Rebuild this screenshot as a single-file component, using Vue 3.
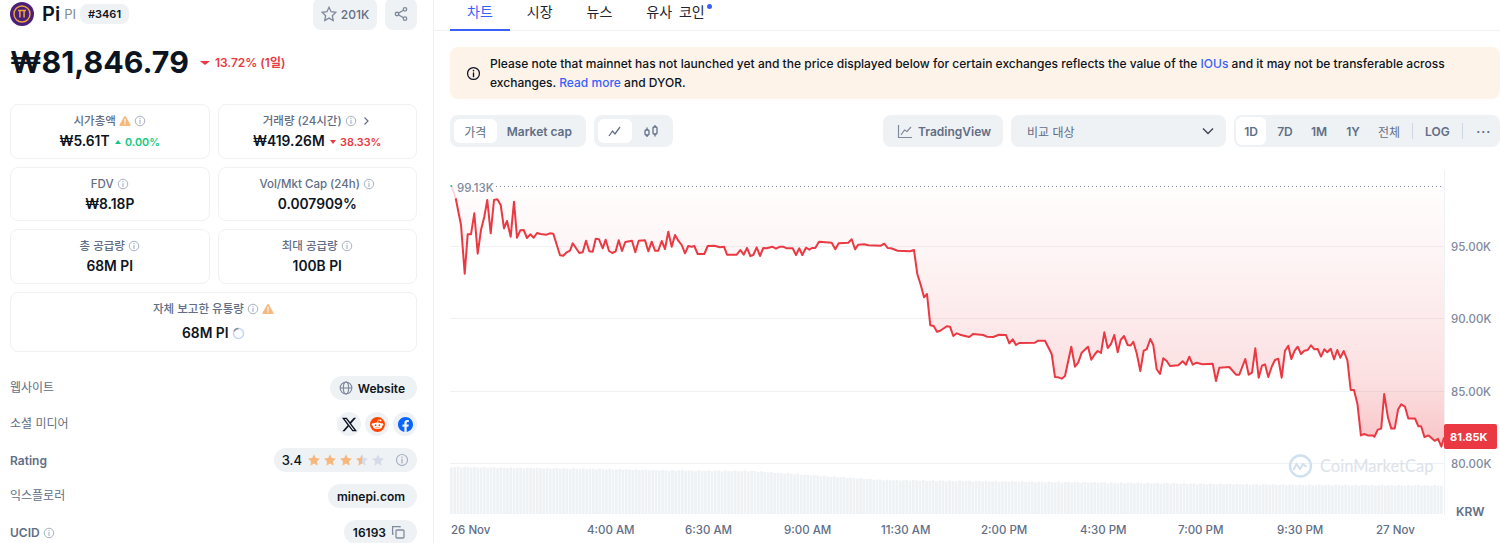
<template>
  <div class="page">
    <svg class="defs" width="0" height="0">
      <symbol id="i-info" viewBox="0 0 24 24">
        <circle cx="12" cy="12" r="9.5" fill="none" stroke="currentColor" stroke-width="2" />
        <path d="M12 11v6" stroke="currentColor" stroke-width="2.2" stroke-linecap="round" />
        <circle cx="12" cy="7.4" r="1.3" fill="currentColor" />
      </symbol>
      <symbol id="i-warn" viewBox="0 0 24 24">
        <path d="M10.3 3.2a2 2 0 0 1 3.4 0l9 15.8a2 2 0 0 1-1.7 3H3a2 2 0 0 1-1.7-3z" fill="#f6b87e" />
        <path d="M12 8.5v6" stroke="#fff" stroke-width="2.4" stroke-linecap="round" />
        <circle cx="12" cy="18" r="1.4" fill="#fff" />
      </symbol>
      <symbol id="i-star" viewBox="0 0 24 24">
        <path d="M12 2l3.1 6.6 7.1.9-5.2 5 1.3 7.2L12 18.2l-6.3 3.5L7 14.5l-5.2-5 7.1-.9z" />
      </symbol>
    </svg>

    <!-- левая колонка -->
    <aside class="side">
      <div class="head">
        <svg class="logo" viewBox="0 0 24 24">
          <circle cx="12" cy="12" r="12" fill="#4a1f7a" />
          <circle cx="12" cy="12" r="8" fill="none" stroke="#eea63a" stroke-width="1.4" />
          <path d="M8 8.6h8M9.9 8.6v7M14.1 8.6v7" fill="none" stroke="#eea63a" stroke-width="1.5" />
        </svg>
        <span class="name">Pi</span>
        <span class="sym">PI</span>
        <span class="rank">#3461</span>
        <button class="btn star">
          <svg viewBox="0 0 24 24" class="ic16"><use href="#i-star" fill="none" stroke="#808a9d" stroke-width="2" /></svg>
          201K
        </button>
        <button class="btn share">
          <svg viewBox="0 0 24 24" class="ic16" fill="none" stroke="#808a9d" stroke-width="2">
            <circle cx="18" cy="5" r="2.6" /><circle cx="6" cy="12" r="2.6" /><circle cx="18" cy="19" r="2.6" />
            <path d="M8.3 10.7l7.4-4.4M8.3 13.3l7.4 4.4" />
          </svg>
        </button>
      </div>

      <div class="price-row">
        <span class="price">₩81,846.79</span>
        <span class="down big"><i class="tri-down"></i>13.72% (1일)</span>
      </div>

      <div class="cards">
        <div class="card">
          <div class="label">시가총액 <svg class="ic12"><use href="#i-warn" /></svg> <svg class="ic12 inf"><use href="#i-info" /></svg></div>
          <div class="value">₩5.61T <span class="up"><i class="tri-up"></i>0.00%</span></div>
        </div>
        <div class="card">
          <div class="label">거래량 (24시간) <svg class="ic12 inf"><use href="#i-info" /></svg>
            <svg class="ic12 chev" viewBox="0 0 12 12" fill="none" stroke="#616e85" stroke-width="1.2"><path d="M4.5 2.5L8 6l-3.5 3.5" /></svg>
          </div>
          <div class="value">₩419.26M <span class="down"><i class="tri-down"></i>38.33%</span></div>
        </div>
        <div class="card" v-for="c in simpleCards" :key="c.label">
          <div class="label">{{ c.label }} <svg class="ic12 inf"><use href="#i-info" /></svg></div>
          <div class="value">{{ c.value }}</div>
        </div>
        <div class="card wide">
          <div class="label">자체 보고한 유통량 <svg class="ic12 inf"><use href="#i-info" /></svg> <svg class="ic12"><use href="#i-warn" /></svg></div>
          <div class="value">68M PI
            <svg class="spin" viewBox="0 0 14 14" fill="none" stroke-width="1.6">
              <circle cx="7" cy="7" r="5.4" stroke="#c6d4fb" />
              <path d="M2.2 4.6A5.4 5.4 0 0 1 7 1.6" stroke="#8a9099" />
            </svg>
          </div>
        </div>
      </div>

      <div class="rows">
        <div class="row">
          <span class="rlabel up2">웹사이트</span>
          <span class="pill">
            <svg viewBox="0 0 24 24" class="ic14" fill="none" stroke="#808a9d" stroke-width="2">
              <circle cx="12" cy="12" r="10" /><ellipse cx="12" cy="12" rx="4.5" ry="10" /><path d="M2 12h20" />
            </svg>
            Website
          </span>
        </div>
        <div class="row">
          <span class="rlabel up2">소셜 미디어</span>
          <span class="socials">
            <span class="round">
              <svg viewBox="0 0 24 24" class="ic14"><path fill="#0d1421" d="M18.901 1.153h3.68l-8.04 9.19L24 22.846h-7.406l-5.8-7.584-6.638 7.584H.474l8.6-9.83L0 1.154h7.594l5.243 6.932ZM17.61 20.644h2.039L6.486 3.24H4.298Z" /></svg>
            </span>
            <span class="round">
              <svg viewBox="0 0 24 24" class="ic14">
                <circle cx="12" cy="12" r="12" fill="#ff4500" />
                <ellipse cx="12" cy="14" rx="7.6" ry="5.2" fill="#fff" />
                <circle cx="4.6" cy="11.8" r="1.9" fill="#fff" /><circle cx="19.4" cy="11.8" r="1.9" fill="#fff" />
                <circle cx="9" cy="13" r="1.4" fill="#ff4500" /><circle cx="15" cy="13" r="1.4" fill="#ff4500" />
                <path d="M8.8 16.2c2 1.4 4.4 1.4 6.4 0" stroke="#ff4500" stroke-width="1" fill="none" />
                <path d="M12 9l1-4.4 3.4.8" stroke="#fff" stroke-width="1" fill="none" />
                <circle cx="17" cy="5.4" r="1.4" fill="#fff" />
              </svg>
            </span>
            <span class="round">
              <svg viewBox="0 0 24 24" class="ic14"><path fill="#0866ff" d="M24 12.073c0-6.627-5.373-12-12-12s-12 5.373-12 12c0 5.99 4.388 10.954 10.125 11.854v-8.385H7.078v-3.47h3.047V9.43c0-3.007 1.792-4.669 4.533-4.669 1.312 0 2.686.235 2.686.235v2.953H15.83c-1.491 0-1.956.925-1.956 1.874v2.25h3.328l-.532 3.47h-2.796v8.385C19.612 23.027 24 18.062 24 12.073z" /></svg>
            </span>
          </span>
        </div>
        <div class="row">
          <span class="rlabel strong">Rating</span>
          <span class="pill rating">
            3.4
            <span class="stars">
              <svg v-for="n in 5" :key="n" viewBox="0 0 24 24" class="ic14 rstar">
                <defs>
                  <linearGradient id="half"><stop offset="50%" stop-color="#f6b87e" /><stop offset="50%" stop-color="#d5dbe8" /></linearGradient>
                </defs>
                <use href="#i-star" :fill="n < 4 ? '#f6b87e' : n === 4 ? 'url(#half)' : '#d5dbe8'" />
              </svg>
            </span>
            <svg class="ic14 inf"><use href="#i-info" /></svg>
          </span>
        </div>
        <div class="row">
          <span class="rlabel up2">익스플로러</span>
          <span class="pill">minepi.com</span>
        </div>
        <div class="row">
          <span class="rlabel strong">UCID <svg class="ic12 inf"><use href="#i-info" /></svg></span>
          <span class="pill">
            16193
            <svg viewBox="0 0 14 14" class="ic14" fill="none" stroke="#808a9d" stroke-width="1.3">
              <rect x="5" y="5" width="8" height="8" rx="1" /><path d="M9 2.6V1.6H1.6V9h1" />
            </svg>
          </span>
        </div>
      </div>
    </aside>

    <!-- правая часть -->
    <main class="main">
      <nav class="tabs">
        <a class="tab active">차트</a>
        <a class="tab">시장</a>
        <a class="tab">뉴스</a>
        <a class="tab dotted">유사 코인</a>
      </nav>

      <div class="content">
        <div class="notice">
          <svg class="notice-ic"><use href="#i-info" /></svg>
          <p>Please note that mainnet has not launched yet and the price displayed below for certain exchanges reflects the value of the <a>IOUs</a> and it may not be transferable across exchanges. <a>Read more</a> and DYOR.</p>
        </div>

        <div class="toolbar">
          <div class="group g-kind">
            <span class="seg on cjk">가격</span>
            <span class="seg">Market cap</span>
          </div>
          <div class="group g-type">
            <span class="seg ico on">
              <svg viewBox="0 0 16 16" class="ic16" fill="none" stroke="#616e85" stroke-width="1.3"><path d="M2 13l3.5-5 2.5 3 5-7" /></svg>
            </span>
            <span class="seg ico">
              <svg viewBox="0 0 16 16" class="ic16" fill="none" stroke="#616e85" stroke-width="1.3">
                <rect x="2" y="7" width="4" height="5" rx="1" /><path d="M4 4.5V7M4 12v2" />
                <rect x="10" y="4" width="4" height="7" rx="1" /><path d="M12 2v2M12 11v2.5" />
              </svg>
            </span>
          </div>
          <div class="group plain tv">
            <svg viewBox="0 0 16 16" class="ic16" fill="none" stroke="#808a9d" stroke-width="1.2"><path d="M1.5 2v12.5H15M4 12l3.5-5 2.5 1.500L14 4" /></svg>
            TradingView
          </div>
          <div class="group plain select">
            <span class="cjk">비교 대상</span>
            <svg viewBox="0 0 12 12" class="ic12" fill="none" stroke="#3d4656" stroke-width="1.4"><path d="M1 3.5l5 5 5-5" /></svg>
          </div>
          <div class="group range">
            <span class="rng on">1D</span>
            <span class="rng">7D</span>
            <span class="rng">1M</span>
            <span class="rng">1Y</span>
            <span class="rng cjk">전체</span>
            <i class="sep"></i>
            <span class="rng">LOG</span>
            <i class="sep"></i>
            <span class="rng more">···</span>
          </div>
        </div>

        <!-- график: координаты в viewBox совпадают с координатами страницы -->
        <svg class="chart" viewBox="450 165 1050 378" width="1050" height="378">
          <defs>
            <linearGradient id="area" gradientUnits="userSpaceOnUse" x1="0" y1="187" x2="0" y2="447">
              <stop offset="0" stop-color="#ea3943" stop-opacity="0.01" />
              <stop offset="0.25" stop-color="#ea3943" stop-opacity="0.05" />
              <stop offset="0.75" stop-color="#ea3943" stop-opacity="0.16" />
              <stop offset="1" stop-color="#ea3943" stop-opacity="0.3" />
            </linearGradient>
          </defs>

          <path v-for="y in gridY" :key="y" :d="`M450 ${y}H1444`" stroke="#eff2f5" />
          <path :d="areaPath" fill="url(#area)" />
          <path d="M449.500 170V515M1444.500 170V515" stroke="#eff2f5" />
          <path d="M496 186.500H1444" stroke="#808a9d" stroke-dasharray="1 3" />

          <rect v-for="b in bars" :key="b.x" :x="b.x" :y="b.y" width="2.7" :height="514 - b.y" fill="#eff2f5" />

          <path d="M451.500 186L455.500 198" stroke="#fbd9db" stroke-width="2" fill="none" />
          <circle cx="451.300" cy="186" r="1" fill="#16c784" />
          <polyline :points="linePoints" fill="none" stroke="#ea3943" stroke-width="2" stroke-linejoin="round" />

          <text class="axis" x="457" y="191.500">99.13K</text>
          <text v-for="(t, i) in yLabels" :key="t" class="axis" x="1451" :y="gridY[i] + 4">{{ t }}</text>
          <text v-for="t in xLabels" :key="t.text" class="xl" :x="t.x" y="533.500">{{ t.text }}</text>
          <text class="krw" x="1456" y="515.500">KRW</text>

          <circle cx="1300.500" cy="466" r="10.500" fill="none" stroke="#cfe0ee" stroke-width="2.4" />
          <path d="M1293.500 470l3-6 3.500 5 3-5 3.500 3" fill="none" stroke="#cfe0ee" stroke-width="2" />
          <text class="mark" x="1320" y="472">CoinMarketCap</text>

          <rect x="1444" y="424" width="53" height="25" rx="2" fill="#ea3943" />
          <text class="tag" x="1450" y="440.500">81.85K</text>
        </svg>
      </div>
    </main>
  </div>
</template>

<script setup>
const simpleCards = [
  { label: "FDV", value: "₩8.18P" },
  { label: "Vol/Mkt Cap (24h)", value: "0.007909%" },
  { label: "총 공급량", value: "68M PI" },
  { label: "최대 공급량", value: "100B PI" },
];

const gridY = [246.5, 318.5, 391.5, 463.5];
const yLabels = ["95.00K", "90.00K", "85.00K", "80.00K"];
const xLabels = [
  { text: "26 Nov", x: 451 },
  { text: "4:00 AM", x: 587 },
  { text: "6:30 AM", x: 685 },
  { text: "9:00 AM", x: 784 },
  { text: "11:30 AM", x: 881 },
  { text: "2:00 PM", x: 981 },
  { text: "4:30 PM", x: 1080 },
  { text: "7:00 PM", x: 1178 },
  { text: "9:30 PM", x: 1277 },
  { text: "27 Nov", x: 1376 },
];

// снято с графика вручную
const line = [
  [455.7,198.3],[461,225],[464.7,273.7],[467.7,234.3],[471,234.3],[474.3,213.3],[477.7,253.7],[481,230],[484.3,216.7],[487.3,200],
  [490.7,233.3],[494,200],[497.3,199.3],[500.7,205],[504,228.3],[507,221],[510.7,236.7],[514,201.7],[517,237.7],[520.3,230.3],
  [523.7,230],[527,238],[530.3,234.3],[533.7,237.7],[537,233],[540.3,234],[546.7,234.7],[550,233.3],[553.3,233.7],[560,255.3],
  [563.3,255.7],[566.7,252.3],[570,250.7],[572.7,243.3],[579.3,253],[582.7,252.3],[586,240.7],[589.3,251.3],[592.7,251.7],[595.7,238.7],
  [599,239.3],[602.7,248.3],[605.7,239.7],[609,251],[612.3,253],[615.7,251.3],[618.7,240.3],[622,251],[625.3,242],[632,240.7],
  [635.3,252.3],[638.7,240.7],[645,240.3],[648.3,251.3],[651.7,241.7],[655,250.7],[658.3,250.7],[661.7,241],[665,249],[668.3,231.7],
  [671.7,246.7],[675,235],[678.3,240.7],[681.7,245],[685,253.3],[688.3,246],[691.7,246.7],[694.3,246],[697.7,254],[704.3,254],
  [707.7,246],[714.3,245.7],[720,247.3],[724,246.7],[727,254.7],[736.7,254.7],[740.3,250],[743.7,254.7],[747,248],[750.3,256],
  [753.3,255],[756.7,247.3],[760,256],[763.3,248],[766.7,248.3],[772.3,246.7],[776,248.7],[780,246.7],[783.3,246.7],[786.7,248.3],
  [792.7,248.3],[796,255],[799.3,248.3],[802.3,255],[806,247.7],[809.3,249.7],[812,248],[815.3,248],[819,241.7],[831.7,242.7],
  [835.3,249.3],[838.7,243.3],[848.3,242.7],[851.7,239.3],[855,249.3],[858.3,244.7],[864.3,244.3],[868.3,245.3],[881,245.7],[884.3,243.7],
  [887.7,248],[891,248.3],[897.7,250.7],[910,251.3],[914,250],[917.3,274],[920.7,284.7],[924,297.3],[927,294],[930.3,325.3],
  [933.7,326],[937,331.7],[940.3,330.7],[946.7,326.3],[950,326.7],[953.3,336],[956.7,333.3],[960,334.7],[969.3,337],[973,334],
  [983.3,335],[986.7,336.7],[993.3,337],[999,334.7],[1006,335],[1009.3,343.3],[1012.7,339.3],[1016,345],[1019.3,343],[1035,342.7],
  [1038.3,340.7],[1045,340.7],[1051.7,354],[1055,377],[1058.3,377.3],[1061.7,378.7],[1065,376],[1071.3,346.7],[1075,366.7],[1078.3,362.3],
  [1081.7,352.7],[1088,346.7],[1091.3,359.7],[1095,354],[1097.7,351],[1101,353],[1104.3,332.3],[1107.7,348],[1111,344],[1114.3,335],
  [1117.7,352.3],[1120.7,340],[1124,336],[1127.7,345],[1130.7,345.5],[1133.3,341.7],[1136.7,353.3],[1140.3,371],[1143.7,350.7],[1146.7,349.3],
  [1150.3,339],[1153.3,345],[1156.7,369.3],[1160,374],[1163.3,358.3],[1166.7,361],[1170,366],[1178.3,365.3],[1182.7,361.3],[1186,364.7],
  [1189.3,356.7],[1192.7,364.7],[1196.7,362.7],[1202.7,364.3],[1212.7,363.7],[1216,381],[1219.3,367.7],[1229.3,367],[1236,374.7],[1239.3,374.7],
  [1245.3,359],[1248.7,374.7],[1252,372.7],[1255.3,348.3],[1258.7,377.7],[1262,365.7],[1265,364.3],[1268.3,377],[1271.7,366.7],[1275,360],
  [1278.3,358.7],[1281.7,377.7],[1285,350.7],[1288.3,345.7],[1291.3,359],[1294.7,350.7],[1297.7,346.7],[1301,354],[1304.3,350.7],[1307.7,350],
  [1311,345.3],[1314.3,349.3],[1317.7,349],[1321,356.7],[1324.3,349.3],[1327.3,352.3],[1330.7,348.7],[1334,359.3],[1337.3,350],[1340.3,357.7],
  [1343.7,351],[1347.4,360.3],[1350.7,390],[1354,390],[1357.5,404.3],[1360.9,435.4],[1364.3,434],[1367.7,435.4],[1372.7,435.4],[1374.4,436.8],
  [1377.8,429.6],[1381.2,428.6],[1384.2,394.1],[1388,417.8],[1391.3,428.6],[1394.7,428.6],[1398.1,409.4],[1401.2,404.3],[1404.9,406.6],[1408.3,418.5],
  [1415,418.5],[1418.4,426.3],[1421.1,426.3],[1424.5,437.1],[1428.6,435.4],[1434.6,440.8],[1438,438.8],[1441.4,446.6],[1444,437.4],
];
const linePoints = line.map((p) => p.join(",")).join(" ");
const areaPath = "M451 187L455.7 198.3L" + line.map((p) => p.join(" ")).join("L") + "L1444 187Z";

// объёмы: верх столбиков по опорным точкам
const volStops = [[450,467],[600,469],[670,470.5],[750,471],[880,480],[1050,482],[1300,485],[1444,485.500]];
function volTop(x) {
  for (let i = 1; i < volStops.length; i++) {
    const [x0, y0] = volStops[i - 1];
    const [x1, y1] = volStops[i];
    if (x <= x1) return y0 + ((y1 - y0) * (x - x0)) / (x1 - x0);
  }
  return 485;
}
const bars = [];
for (let x = 450; x < 1443; x += 3.3) {
  bars.push({ x: +x.toFixed(1), y: +(volTop(x) + Math.sin(x * 0.7) * 0.5).toFixed(1) });
}
</script>

<style>
html, body { margin: 0; overflow: hidden; background: #fff; }
</style>

<style scoped>
.page {
  display: flex;
  width: 1500px;
  height: 543px;
  overflow: hidden;
  font-family: Inter, "Noto Sans CJK KR", sans-serif;
  color: #0d1421;
  -webkit-font-smoothing: antialiased;
}
.defs { position: absolute; }
.ic12 { width: 12px; height: 12px; vertical-align: -2px; }
.ic14 { width: 14px; height: 14px; flex: none; }
.ic16 { width: 16px; height: 16px; flex: none; }
.inf { color: #a6b0c3; }
.chev { margin-left: 3px; }

.side {
  width: 434px;
  box-sizing: border-box;
  flex: none;
  padding: 0 16px 0 10px;
  border-right: 1px solid #eff2f5;
}
.head {
  display: flex;
  align-items: center;
  height: 32px;
  margin-top: -2px;
}
.logo { width: 24px; height: 24px; margin-right: 8px; }
.name { font-size: 20px; font-weight: 600; margin-right: 4px; }
.sym { font-size: 13px; color: #808a9d; margin-right: 4px; }
.rank {
  background: #eff2f5;
  border-radius: 8px;
  font-size: 11px;
  font-weight: 600;
  line-height: 20px;
  padding: 0 8px;
}
.btn {
  display: flex;
  align-items: center;
  justify-content: center;
  height: 32px;
  border: 0;
  border-radius: 8px;
  background: #eff2f5;
  font: 500 12px Inter, sans-serif;
  color: #616e85;
}
.star { width: 64px; gap: 4px; margin-left: auto; }
.share { width: 32px; margin-left: 8px; }

.price-row {
  display: flex;
  align-items: center;
  gap: 9px;
  height: 36px;
  margin-top: 14px;
}
.price { font-size: 30.3px; font-weight: 700; line-height: 36px; }
.down { color: #ea3943; font-size: 10.8px; font-weight: 600; }
.down.big { font-size: 12px; margin-top: -2px; }
.big .tri-down { border-left-width: 5px; border-right-width: 5px; margin-right: 5px; }
.up { color: #16c784; font-size: 10.8px; font-weight: 600; }
.tri-down, .tri-up {
  display: inline-block;
  width: 0;
  height: 0;
  border-left: 3.5px solid transparent;
  border-right: 3.5px solid transparent;
  vertical-align: 2px;
  margin: 0 4px 0 2px;
}
.tri-down { border-top: 4px solid #ea3943; }
.tri-up { border-bottom: 4px solid #16c784; }

.cards {
  display: grid;
  grid-template-columns: 1fr 1fr;
  gap: 8px;
  margin-top: 24px;
}
.card {
  box-sizing: border-box;
  height: 54.5px;
  padding: 7px 4px 0;
  border: 1px solid #eff2f5;
  border-radius: 8px;
  text-align: center;
}
.card.wide {
  grid-column: 1 / 3;
  height: 60.5px;
}
.wide .label { margin-bottom: 5px; }
.label {
  font-size: 11.5px;
  font-weight: 500;
  line-height: 18px;
  color: #616e85;
  margin-bottom: 1px;
}
.value { font-size: 13.8px; font-weight: 600; line-height: 21px; }
.spin { width: 13px; height: 13px; vertical-align: -2px; }

.rows {
  display: flex;
  flex-direction: column;
  gap: 12px;
  margin-top: 24px;
}
.row {
  display: flex;
  align-items: center;
  justify-content: space-between;
  height: 24px;
}
.rlabel { font-size: 12px; color: #616e85; }
.rlabel.strong { font-weight: 600; }
.up2 { padding-bottom: 3px; }
.pill {
  display: flex;
  align-items: center;
  gap: 5px;
  height: 24px;
  padding: 0 12px 0 9px;
  border-radius: 12px;
  background: #eff2f5;
  font-size: 12px;
  font-weight: 600;
}
.pill.rating { padding: 0 8px; font-weight: 500; font-size: 13px; }
.stars { display: flex; gap: 2px; margin-right: 5px; }
.socials { display: flex; gap: 4px; }
.round {
  display: flex;
  align-items: center;
  justify-content: center;
  width: 24px;
  height: 24px;
  border-radius: 50%;
  background: #eff2f5;
}
.round svg { width: 15px; height: 15px; }

.main { flex: 1; min-width: 0; }
.tabs {
  display: flex;
  height: 31px;
  box-sizing: border-box;
  padding-left: 16px;
  border-bottom: 1px solid #eff2f5;
}
.tab {
  position: relative;
  height: 31px;
  box-sizing: border-box;
  padding: 0 17px;
  font-size: 14px;
  line-height: 24px;
  color: #222531;
}
.tab.active { color: #3861fb; border-bottom: 2px solid #3861fb; }
.tab.dotted::after {
  content: "";
  position: absolute;
  top: 4px;
  right: 10px;
  width: 5px;
  height: 5px;
  border-radius: 50%;
  background: #3861fb;
}
.tab.dotted { word-spacing: 3px; }
.content { padding: 16px 0 0 16px; }
.notice {
  display: flex;
  align-items: center;
  gap: 9px;
  height: 52px;
  box-sizing: border-box;
  padding: 0 16px;
  border-radius: 8px;
  background: #fef3e9;
}
.notice-ic { width: 15px; height: 15px; color: #0d1421; flex: none; }
.notice p {
  margin: 0;
  width: 970px;
  font-size: 12px;
  font-weight: 500;
  line-height: 19px;
  letter-spacing: 0.013px;
}
.notice a { color: #3861fb; }

.toolbar {
  display: flex;
  gap: 8px;
  margin-top: 16px;
  height: 32px;
}
.group {
  display: flex;
  align-items: center;
  padding: 4px;
  border-radius: 8px;
  background: #eff2f5;
  box-sizing: border-box;
  font-size: 12px;
  font-weight: 600;
  color: #616e85;
}
.g-kind { width: 136px; }
.g-type { width: 79px; }
.seg {
  display: flex;
  align-items: center;
  height: 24px;
  padding: 0 10px;
  border-radius: 6px;
  white-space: nowrap;
}
.seg.on.cjk { width: 43px; padding: 0; justify-content: center; }
.seg.ico { width: 34px; justify-content: center; padding: 0; }
.seg.ico + .seg.ico { width: 37px; }
.seg.on { background: #fff; }
.cjk { font-weight: 400; }
.plain { padding: 0 14px; gap: 5px; }
.tv { margin-left: auto; width: 120px; }
.select { width: 215px; padding: 0 12px 0 16px; justify-content: space-between; }
.range { padding: 2px; gap: 4px; width: 266px; flex: none; }
.rng {
  display: flex;
  align-items: center;
  justify-content: center;
  box-sizing: border-box;
  flex: none;
  min-width: 30px;
  height: 28px;
  padding: 0 6px;
  border-radius: 6px;
  white-space: nowrap;
}
.rng.on { background: #fff; }
.sep { flex: none; width: 1px; height: 16px; margin: 0 2px; background: #cfd6e4; }
.more { letter-spacing: 1px; font-weight: 700; }

.chart { display: block; margin-top: 18px; }
.axis { font-size: 11.5px; font-weight: 500; fill: #808a9d; font-family: Inter, sans-serif; }
.xl { font-size: 11.5px; font-weight: 500; fill: #616e85; font-family: Inter, sans-serif; }
.krw { font-size: 12px; font-weight: 600; fill: #616e85; font-family: Inter, sans-serif; }
.tag { font-size: 11px; font-weight: 700; fill: #fff; font-family: Inter, sans-serif; }
.mark { font-size: 16.5px; font-weight: 400; fill: #dde2ea; font-family: Lato, sans-serif; }
</style>
